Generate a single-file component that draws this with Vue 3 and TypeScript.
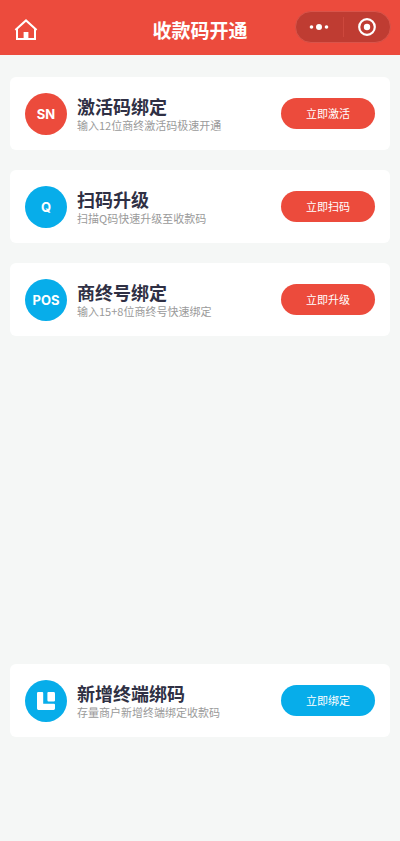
<script setup lang="ts">
interface Entry {
  badge: string
  title: string
  desc: string
  action: string
  badgeTone: 'red' | 'blue'
  buttonTone: 'red' | 'blue'
}

const entries: Entry[] = [
  { badge: 'SN', title: '激活码绑定', desc: '输入12位商终激活码极速开通', action: '立即激活', badgeTone: 'red', buttonTone: 'red' },
  { badge: 'Q', title: '扫码升级', desc: '扫描Q码快速升级至收款码', action: '立即扫码', badgeTone: 'blue', buttonTone: 'red' },
  { badge: 'POS', title: '商终号绑定', desc: '输入15+8位商终号快速绑定', action: '立即升级', badgeTone: 'blue', buttonTone: 'red' },
  { badge: '', title: '新增终端绑码', desc: '存量商户新增终端绑定收款码', action: '立即绑定', badgeTone: 'blue', buttonTone: 'blue' },
]
</script>

<template>
  <div class="page">
    <header class="bar">
      <div class="side">
        <button class="home" type="button" aria-label="首页">
          <svg width="24" height="24" viewBox="0 0 24 24" fill="none">
            <path d="M1.4 12 12 2.4 22.6 12M3 11V20.9H21V11" stroke="#fff" stroke-width="2" />
            <path d="M9.6 14h4.8v6H9.6z" fill="#fff" />
          </svg>
        </button>
      </div>
      <h1>收款码开通</h1>
      <div class="side end">
        <div class="capsule">
          <button type="button" aria-label="更多">
            <svg width="20" height="8" viewBox="0 0 20 8" fill="#fff">
              <circle cx="2.5" cy="4" r="1.8" />
              <circle cx="10" cy="4" r="3" />
              <circle cx="17.5" cy="4" r="1.8" />
            </svg>
          </button>
          <span class="divider"></span>
          <button type="button" aria-label="关闭">
            <svg width="20" height="20" viewBox="0 0 20 20" fill="none">
              <circle cx="10" cy="10" r="7.8" stroke="#fff" stroke-width="2.2" />
              <circle cx="10" cy="10" r="3.2" fill="#fff" />
            </svg>
          </button>
        </div>
      </div>
    </header>

    <main class="list">
      <section v-for="entry in entries" :key="entry.title" class="card">
        <div class="badge" :class="entry.badgeTone">
          <template v-if="entry.badge">{{ entry.badge }}</template>
          <svg v-else width="20" height="20" viewBox="0 0 20 20" fill="#fff">
            <path d="M2.2 1H6.2Q7.2 1 7.2 2V12.8H18Q19 12.8 19 13.8V17.6Q19 19 17.6 19H2.4Q1 19 1 17.6V2.2Q1 1 2.2 1Z" />
            <path d="M12.4 1H17.6Q19 1 19 2.4V9.6Q19 10.4 18.2 10.4H12.6Q11.4 10.4 11.4 9.2V2Q11.4 1 12.4 1Z" />
          </svg>
        </div>
        <div class="info">
          <h2>{{ entry.title }}</h2>
          <p>{{ entry.desc }}</p>
        </div>
        <button class="action" :class="entry.buttonTone" type="button">{{ entry.action }}</button>
      </section>
    </main>
  </div>
</template>

<style>
body {
  background: #f5f7f6;
}
</style>

<style scoped>
.page {
  display: flex;
  flex-direction: column;
  box-sizing: border-box;
  min-height: 100vh;
  background: #f5f7f6;
  font-family: "Noto Sans", "Noto Sans CJK SC", sans-serif;
}
h1, h2, p {
  margin: 0;
}
button {
  border: 0;
  padding: 0;
  font-family: "Noto Sans CJK SC", sans-serif;
  color: #fff;
  background: none;
  cursor: pointer;
}
svg {
  display: block;
}
.bar {
  display: flex;
  align-items: center;
  height: 55px;
  padding: 0 9px 0 14px;
  background: #ec4b3d;
}
.side {
  flex: 1;
  display: flex;
  padding-top: 4px;
}
.end {
  justify-content: flex-end;
  padding: 0 0 2px;
}
h1 {
  padding: 4px 5px 0 0;
  font: 700 19px/28px "Noto Sans CJK SC", sans-serif;
  color: #fff;
}
.capsule {
  display: flex;
  align-items: center;
  box-sizing: border-box;
  width: 96px;
  height: 32px;
  border: 1px solid #d9544a;
  border-radius: 16px;
  background: #bf3c32;
}
.capsule button {
  flex: 1;
  display: flex;
  justify-content: center;
  align-items: center;
  height: 100%;
}
.divider {
  width: 1px;
  height: 20px;
  background: #cd483d;
}
.list {
  flex: 1;
  display: flex;
  flex-direction: column;
  gap: 20px;
  padding: 22px 10px 104px;
}
.card {
  display: flex;
  align-items: center;
  box-sizing: border-box;
  height: 73px;
  padding: 0 15px;
  border-radius: 6px;
  background: #fff;
}
.card:last-child {
  margin-top: auto;
}
.badge {
  display: flex;
  justify-content: center;
  align-items: center;
  flex: none;
  width: 42px;
  height: 42px;
  border-radius: 50%;
  font: 700 13px/18px Inter, sans-serif;
  color: #fff;
}
.red {
  background: #ec4b3c;
}
.blue {
  background: #07adea;
}
.info {
  flex: 1;
  min-width: 0;
  margin-left: 10px;
}
h2 {
  font: 700 18px/22px "Noto Sans CJK SC", sans-serif;
  color: #2f3044;
}
p {
  font: 400 11px/16px "Noto Sans CJK SC", sans-serif;
  color: #9a9a9a;
}
.action {
  flex: none;
  width: 94px;
  height: 31px;
  border-radius: 16px;
  font-size: 11px;
  line-height: 31px;
}
.action.red {
  background: #ec4b3c;
}
.action.blue {
  background: #07adea;
}
</style>
